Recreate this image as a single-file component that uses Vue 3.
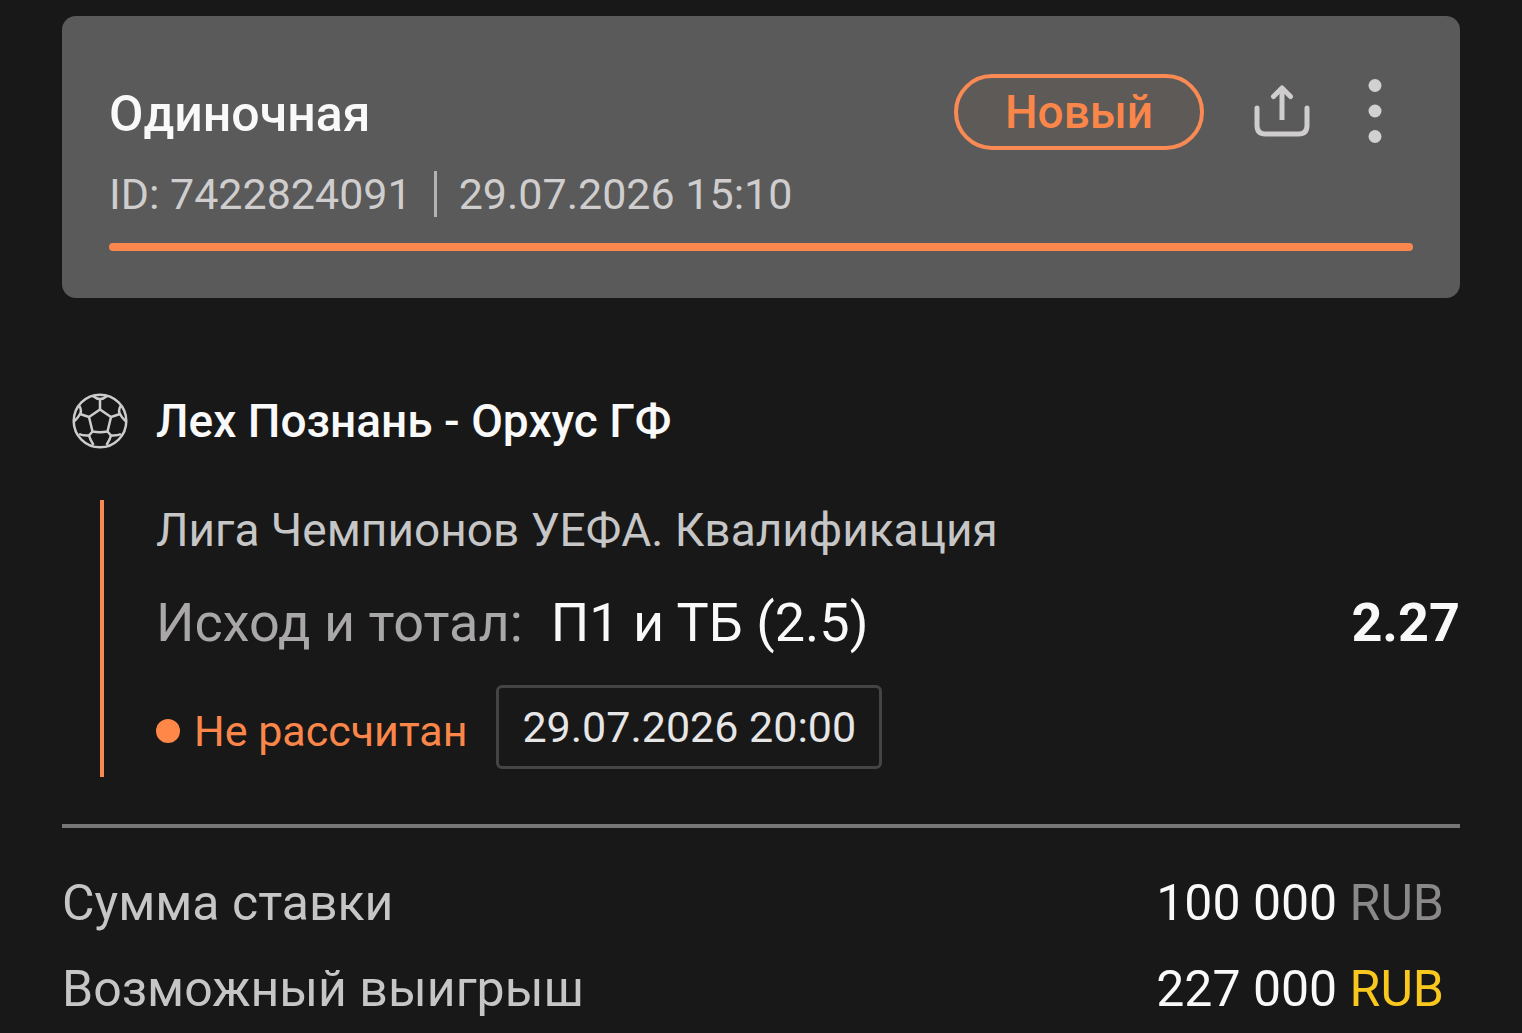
<template>
  <main class="bet">
    <header class="card">
      <div class="card__row">
        <h1 class="card__title">Одиночная</h1>
        <span class="badge">Новый</span>
        <button class="icon-btn share" type="button" aria-label="Поделиться">
          <svg width="58" height="54" viewBox="0 0 58 54" fill="none" stroke="#cfcdcd" stroke-width="5" stroke-linejoin="round">
            <path d="M4 23v17.500q0 8.500 8.500 8.500h33q8.500 0 8.500-8.500V23" stroke-linecap="round" />
            <path d="M29 35V4" />
            <path d="M20.500 11.500L29 3l8.500 8.500" stroke-linecap="round" />
          </svg>
        </button>
        <button class="icon-btn" type="button" aria-label="Меню">
          <svg width="14" height="66" viewBox="0 0 14 66" fill="#d2d0d0">
            <circle cx="7" cy="6.5" r="6.5" />
            <circle cx="7" cy="32" r="6.5" />
            <circle cx="7" cy="57.500" r="6.5" />
          </svg>
        </button>
      </div>
      <p class="card__meta">
        <span>ID: 7422824091</span>
        <span class="card__sep"></span>
        <time>29.07.2026 15:10</time>
      </p>
      <div class="card__line"></div>
    </header>

    <section class="event">
      <div class="event__head">
        <svg class="ball" width="56" height="56" viewBox="0 0 56 56" fill="none" stroke="#cccccc" stroke-width="2.5" stroke-linejoin="round">
          <circle cx="28" cy="28" r="26.300" />
          <path d="M28 16.500L39 24l-3.500 14.500q-7.500 1.500-15 0L17 24z" />
          <path d="M28 16.500V6M39 24l9-3M35.500 38.500l3.500 4M20.500 38.500l-3.500 4M17 24l-9-3" />
          <path d="M21 3q7 6 14 0" />
          <path d="M48.500 13Q46 18 48 21q2 4 5.500 7" />
          <path d="M7.500 13Q10 18 8 21q-2 4-5.500 7" />
          <path d="M49 41q-4 2-10 1.500-1 4-4.500 9.500" />
          <path d="M7 41q4 2 10 1.500 1 4 4.500 9.500" />
        </svg>
        <h2 class="event__title">Лех Познань - Орхус ГФ</h2>
      </div>

      <div class="event__body">
        <p class="event__league">Лига Чемпионов УЕФА. Квалификация</p>
        <div class="event__market">
          <span class="event__label">Исход и тотал:</span>
          <span class="event__pick">П1 и ТБ (2.5)</span>
          <strong class="event__odds">2.27</strong>
        </div>
        <div class="event__status">
          <span class="event__state">Не рассчитан</span>
          <time class="event__date">29.07.2026 20:00</time>
        </div>
      </div>
    </section>

    <dl class="totals">
      <div v-for="row in totals" :key="row.label" class="totals__row">
        <dt>{{ row.label }}</dt>
        <dd>{{ row.value }} <span :class="['currency', { 'currency--win': row.win }]">RUB</span></dd>
      </div>
    </dl>
  </main>
</template>

<script setup>
const totals = [
  { label: "Сумма ставки", value: "100 000", win: false },
  { label: "Возможный выигрыш", value: "227 000", win: true },
];
</script>

<style>
body {
  background: #181818;
}
</style>

<style scoped>
.bet {
  padding: 16px 62px 0;
  font-family: Roboto, "Liberation Sans", sans-serif;
  color: #f9f9f9;
}

h1,
h2,
p,
dl,
dd {
  margin: 0;
}

.card {
  padding: 56px 47px 47px;
  border-radius: 14px;
  background: #5a5a5a;
}

.card__row {
  display: flex;
  align-items: center;
  height: 80px;
}

.card__title {
  flex: 1;
  padding-top: 4px;
  font-size: 50px;
  font-weight: 500;
  line-height: 56px;
}

.badge {
  box-sizing: border-box;
  width: 250px;
  height: 76px;
  margin-right: 49px;
  border: 4px solid #f98a54;
  border-radius: 38px;
  background: #5d5a58;
  color: #fb864a;
  font-size: 46px;
  font-weight: 500;
  line-height: 68px;
  text-align: center;
}

.icon-btn {
  display: flex;
  margin-right: 31px;
  padding: 0;
  border: 0;
  background: none;
}

.share {
  margin-right: 57px;
}

.card__meta {
  display: flex;
  align-items: center;
  height: 84px;
  margin-bottom: 7px;
  font-size: 43px;
  line-height: 52px;
  color: #cfcdcd;
}

.card__sep {
  width: 3px;
  height: 46px;
  margin: 0 22px;
  background: #b4b2b2;
}

.card__line {
  height: 8px;
  border-radius: 4px;
  background: #fb864e;
}

.event {
  padding: 95px 0 47px 10px;
}

.event__head {
  display: flex;
  align-items: center;
  gap: 28px;
}

.event__title {
  font-size: 46px;
  font-weight: 500;
  line-height: 56px;
}

.event__body {
  margin: 51px 0 0 28px;
  padding: 0 0 8px 52px;
  border-left: 4px solid #f58a55;
}

.event__league {
  font-size: 46px;
  line-height: 60px;
  color: #c6c6c6;
}

.event__market {
  display: flex;
  align-items: center;
  height: 125px;
  font-size: 54px;
}

.event__label {
  color: #a9a7a7;
}

.event__pick {
  margin-left: 28px;
}

.event__odds {
  margin-left: auto;
}

.event__status {
  display: flex;
  align-items: center;
}

.event__state {
  display: flex;
  align-items: center;
  gap: 14px;
  padding-top: 8px;
  font-size: 43px;
  color: #fb864a;
}

.event__state::before {
  content: "";
  width: 24px;
  height: 24px;
  border-radius: 50%;
  background: #ff8748;
}

.event__date {
  margin-left: 29px;
  padding: 14px 23px;
  border: 3px solid #444444;
  border-radius: 6px;
  font-size: 43px;
  line-height: 50px;
  color: #e6e6e6;
}

.totals {
  padding-top: 32px;
  border-top: 4px solid #777777;
}

.totals__row {
  display: flex;
  justify-content: space-between;
  padding-right: 16px;
  font-size: 50px;
  line-height: 86px;
}

.totals__row dt {
  color: #c6c6c6;
}

.currency {
  color: #8a8888;
}

.currency--win {
  color: #f9c81f;
}
</style>
